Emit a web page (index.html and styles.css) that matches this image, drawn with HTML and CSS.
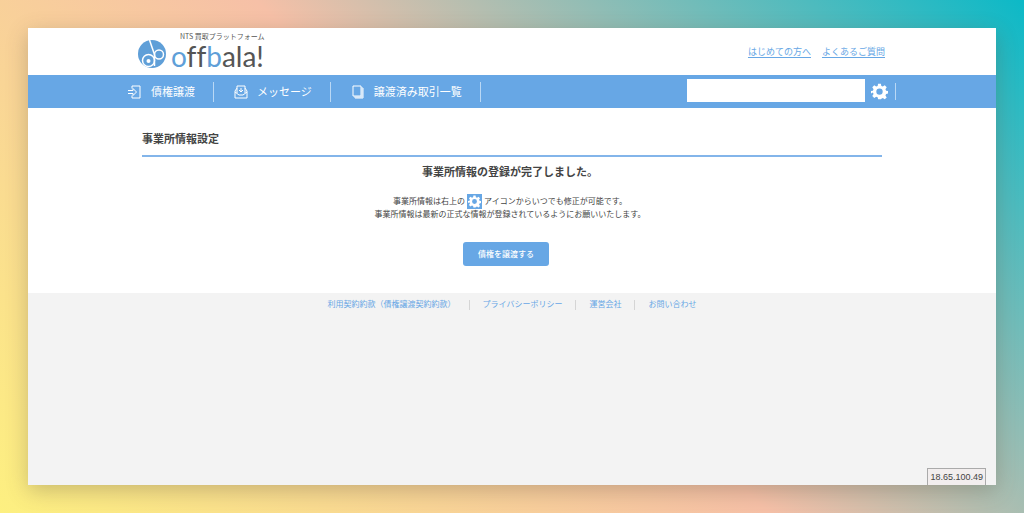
FILE: index.html
```html
<!DOCTYPE html>
<html lang="ja">
<head>
<meta charset="utf-8">
<title>事業所情報設定</title>
<link rel="stylesheet" href="styles.css">
</head>
<body>
<svg class="defs" width="0" height="0" aria-hidden="true">
  <symbol id="gear" viewBox="0 0 24 24">
    <path fill-rule="evenodd" d="M10 1h4l.6 3.1 2.100.9 2.700-1.800 2.800 2.800-1.800 2.700.9 2.100 2.700.5v3.600l-2.700.6-.9 2.100 1.800 2.700-2.800 2.800-2.700-1.800-2.100.9L14 23h-4l-.6-2.800-2.100-.9-2.700 1.800-2.800-2.800 1.800-2.700-.9-2.100L0 14.900v-3.600l2.700-.5.9-2.100L1.800 6l2.800-2.800L7.300 5l2.100-.9zM12 7.600a4.500 4.500 0 1 0 0 9 4.500 4.500 0 0 0 0-9z"/>
  </symbol>
</svg>
<div class="window">
  <header class="header">
    <div class="header-inner">
      <a class="logo" href="#">
        <svg class="logo-mark" viewBox="0 0 56 56" aria-hidden="true">
          <circle cx="28" cy="28" r="28" fill="#5f9fd8"/>
          <g fill="none" stroke="#fff" stroke-width="3">
            <path d="M23 0l10 29"/>
            <circle cx="42" cy="29" r="9"/>
            <circle cx="21" cy="41" r="12"/>
            <path d="M33 29v23"/>
          </g>
          <circle cx="21" cy="42" r="4" fill="#fff"/>
        </svg>
        <span class="logo-text">
          <span class="tagline">NTS 買取プラットフォーム</span>
          <span class="wordmark"><span class="accent">o</span>ff<span class="accent">b</span>ala!</span>
        </span>
      </a>
      <div class="help-links">
        <a href="#">はじめての方へ</a>
        <a href="#">よくあるご質問</a>
      </div>
    </div>
  </header>
  <nav class="nav">
    <div class="nav-inner">
      <a class="nav-item" href="#">
        <svg class="nav-icon" viewBox="0 0 14 14"><path d="M4 3.500V1h8v12H4v-2.500M0 5.500h5V3.500L8.500 7 5 10.500v-2H0"/></svg>
        債権譲渡
      </a>
      <a class="nav-item" href="#">
        <svg class="nav-icon" viewBox="0 0 14 14"><path d="M3 8V1h8v7M3 3L1 6v7h12V6l-2-3M1 7l4 3h4l4-3M7 3v4M5 5l2 2 2-2"/></svg>
        メッセージ
      </a>
      <a class="nav-item" href="#">
        <svg class="nav-icon" viewBox="0 0 14 14"><path d="M2 1h8v10H2zM4 13h8V3M11 2v10H3"/></svg>
        譲渡済み取引一覧
      </a>
      <form class="search">
        <input class="search-input" type="text" aria-label="検索">
        <button class="gear-button" type="button" aria-label="設定"><svg class="gear" viewBox="0 0 24 24"><use href="#gear"/></svg></button>
      </form>
    </div>
  </nav>
  <main class="main">
    <h1 class="title">事業所情報設定</h1>
    <div class="result">
      <h2 class="message">事業所情報の登録が完了しました。</h2>
      <p class="note">事業所情報は右上の<span class="gear-tile"><svg class="gear-small" viewBox="0 0 24 24"><use href="#gear"/></svg></span>アイコンからいつでも修正が可能です。<br>事業所情報は最新の正式な情報が登録されているようにお願いいたします。</p>
      <button class="primary" type="button">債権を譲渡する</button>
    </div>
  </main>
  <footer class="footer">
    <div class="footer-links">
      <a href="#">利用契約約款（債権譲渡契約約款）</a>
      <a href="#">プライバシーポリシー</a>
      <a href="#">運営会社</a>
      <a href="#">お問い合わせ</a>
    </div>
    <div class="address">18.65.100.49</div>
  </footer>
</div>
</body>
</html>
```
FILE: styles.css
```css
* { box-sizing: border-box; }

body {
  margin: 0;
  min-height: 100vh;
  padding: 28px;
  display: flex;
  background: linear-gradient(45deg, #fdf080 0%, #f6c0a7 50%, #0cb9c7 100%);
  color: #444;
  font-family: "Liberation Sans", "Noto Sans CJK JP", sans-serif;
}

.defs { position: absolute; }

.window {
  flex: 1;
  display: flex;
  flex-direction: column;
  background: #fff;
  box-shadow: 0 6px 20px rgba(90, 80, 60, 0.3);
}

.header-inner,
.nav-inner {
  width: 100%;
  max-width: 768px;
  margin: 0 auto;
  display: flex;
  align-items: center;
}

.header-inner {
  height: 47px;
  justify-content: space-between;
  padding: 0 11px 0 10px;
}

.logo {
  display: flex;
  align-items: center;
  gap: 5px;
  color: #555;
  text-decoration: none;
}

.logo-mark { width: 28px; height: 28px; margin-top: 4px; }
.logo-text { display: flex; flex-direction: column; }

.tagline {
  padding-left: 9px;
  font: 7px/8px "Noto Sans CJK JP", sans-serif;
}

.wordmark {
  font: 28px/32px Lato, sans-serif;
  font-variant-ligatures: none;
}

.accent { color: #5f9fd8; }

.help-links {
  display: flex;
  gap: 11px;
  font-size: 9px;
}

.help-links a { color: #67a7e5; text-underline-offset: 2px; }

.nav { background: #67a7e5; }
.nav-inner { height: 33px; }

.nav-item {
  height: 20px;
  display: flex;
  align-items: center;
  gap: 9px;
  padding: 0 18px 0 20px;
  border-right: 1px solid #b9d8f5;
  color: #fff;
  font-size: 11px;
  line-height: 14px;
  text-decoration: none;
}

.nav-item:first-child { padding-left: 0; }

.nav-icon {
  width: 14px;
  height: 14px;
  fill: none;
  stroke: #fff;
  stroke-width: 1;
}

.search {
  margin-left: auto;
  display: flex;
  align-items: center;
  gap: 6px;
}

.search-input {
  width: 178px;
  height: 23px;
  margin-bottom: 3px;
  padding: 0 6px;
  border: 0;
  background: #fff;
}

.gear-button {
  height: 17px;
  padding: 0 7px 0 0;
  border: 0;
  border-right: 1px solid #b9d8f5;
  background: none;
}

.gear { display: block; width: 17px; height: 17px; fill: #fff; }

.main {
  width: 100%;
  max-width: 740px;
  margin: 0 auto;
  padding: 21px 0 27px;
}

.title {
  margin: 0;
  padding-bottom: 5px;
  border-bottom: 2px solid #83b5ea;
  font-size: 11px;
  line-height: 21px;
}

.result {
  display: flex;
  flex-direction: column;
  align-items: center;
  padding: 7px 4px 0 0;
}

.message { margin: 0 0 14px; font-size: 11px; line-height: 16px; }
.note { margin: 0; font-size: 8px; line-height: 12px; text-align: center; }

.gear-tile {
  display: inline-block;
  margin: 0 2px;
  background: #67a7e5;
  vertical-align: middle;
}

.gear-small { display: block; width: 15px; height: 15px; padding: 1px; fill: #fff; }

.primary {
  margin: 21px 8px 0 0;
  padding: 0 15px;
  border: 0;
  border-radius: 3px;
  background: #67a7e5;
  color: #fff;
  font: 500 8px/24px "Noto Sans CJK JP", sans-serif;
}

.footer {
  flex: 1;
  display: flex;
  flex-direction: column;
  justify-content: space-between;
  background: #f3f3f3;
}

.footer-links {
  display: flex;
  justify-content: center;
  padding-top: 7px;
  font-size: 8px;
  line-height: 10px;
}

.footer-links a { padding: 0 13px; color: #67a7e5; text-decoration: none; }
.footer-links a + a { border-left: 1px solid #d5d5d5; }

.address {
  align-self: flex-end;
  margin-right: 10px;
  padding: 0 2px;
  border: 1px solid #aaa;
  border-bottom: 0;
  background: #f2eeee;
  font-size: 9px;
  line-height: 16px;
}
```
